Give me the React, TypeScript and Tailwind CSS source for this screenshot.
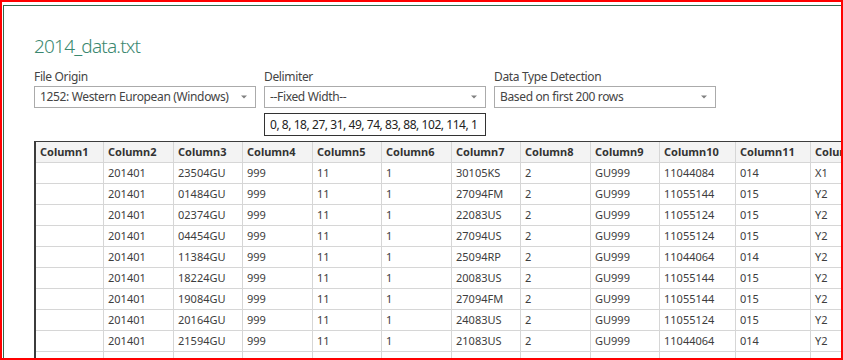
import React from 'react';

const font = { fontFamily: '"Segoe UI", "Noto Sans", sans-serif' };

const headers = [
  'Column1', 'Column2', 'Column3', 'Column4', 'Column5', 'Column6',
  'Column7', 'Column8', 'Column9', 'Column10', 'Column11', 'Column12',
];

const rows: string[][] = [
  ['', '201401', '23504GU', '999', '11', '1', '30105KS', '2', 'GU999', '11044084', '014', 'X1'],
  ['', '201401', '01484GU', '999', '11', '1', '27094FM', '2', 'GU999', '11055144', '015', 'Y2'],
  ['', '201401', '02374GU', '999', '11', '1', '22083US', '2', 'GU999', '11055124', '015', 'Y2'],
  ['', '201401', '04454GU', '999', '11', '1', '27094US', '2', 'GU999', '11055124', '015', 'Y2'],
  ['', '201401', '11384GU', '999', '11', '1', '25094RP', '2', 'GU999', '11044064', '014', 'Y2'],
  ['', '201401', '18224GU', '999', '11', '1', '20083US', '2', 'GU999', '11055144', '015', 'Y2'],
  ['', '201401', '19084GU', '999', '11', '1', '27094FM', '2', 'GU999', '11055144', '015', 'Y2'],
  ['', '201401', '20164GU', '999', '11', '1', '24083US', '2', 'GU999', '11055124', '015', 'Y2'],
  ['', '201401', '21594GU', '999', '11', '1', '21083US', '2', 'GU999', '11044064', '014', 'Y2'],
  ['', '201401', '22163GU', '999', '11', '1', '19073US', '2', 'GU999', '11055144', '015', 'Y2'],
];

const gridCols =
  'grid grid-cols-[68px_70px_69px_70px_69px_70px_69px_70px_69px_76px_75px_80px]';

function Caret() {
  return (
    <svg width="6" height="4" viewBox="0 0 6 4" className="shrink-0">
      <path d="M0 0.5h6L3 3.5z" fill="#808080" />
    </svg>
  );
}

function Dropdown({ label, value }: { label: string; value: string }) {
  return (
    <div className="flex flex-col w-[222px]">
      <div className="text-[12px] leading-4 tracking-[-0.35px] text-[#444] mb-px">{label}</div>
      <div className="h-[22px] border border-[#ababab] flex items-center justify-between pl-[5px] pr-[8px] text-[12px] tracking-[-0.35px] text-[#444]">
        <span className="whitespace-nowrap">{value}</span>
        <Caret />
      </div>
    </div>
  );
}

export default function App() {
  return (
    <div className="w-[843px] h-[360px] border-2 border-[#ff0000] bg-white overflow-hidden" style={font}>
      <div className="ml-px mt-[3px] h-[400px] w-[900px] border-l border-t border-[#2f6a4f] pl-[30px] pt-[26px]">
        <div className="text-[19px] leading-7 font-light tracking-[-0.8px] text-[#3b8870]">2014_data.txt</div>

        <div className="flex gap-2 mt-[9px]">
          <Dropdown label="File Origin" value="1252: Western European (Windows)" />
          <div className="flex flex-col">
            <Dropdown label="Delimiter" value="--Fixed Width--" />
            <div className="mt-[5px] w-[222px] h-[23px] border border-[#333] flex items-center pl-[5px] text-[12px] tracking-[-0.45px] text-[#222] overflow-hidden whitespace-nowrap">
              0, 8, 18, 27, 31, 49, 74, 83, 88, 102, 114, 1
            </div>
          </div>
          <Dropdown label="Data Type Detection" value="Based on first 200 rows" />
        </div>

        <div className="mt-[5px] border-l-2 border-t border-[#3c3c3c] text-[11px]">
          <div className={`${gridCols} h-[21px] bg-[#f3f3f3]`}>
            {headers.map((h) => (
              <div
                key={h}
                className="border-r border-b border-[#d6d6d6] pl-1 flex items-center font-bold text-[#333] whitespace-nowrap overflow-hidden"
              >
                {h}
              </div>
            ))}
          </div>
          {rows.map((r, i) => (
            <div key={i} className={`${gridCols} h-[21px]`}>
              {r.map((c, j) => (
                <div
                  key={j}
                  className="border-r border-b border-[#d6d6d6] pl-1 flex items-center text-[#3d3d3d] whitespace-nowrap overflow-hidden"
                >
                  {c}
                </div>
              ))}
            </div>
          ))}
        </div>
      </div>
    </div>
  );
}
